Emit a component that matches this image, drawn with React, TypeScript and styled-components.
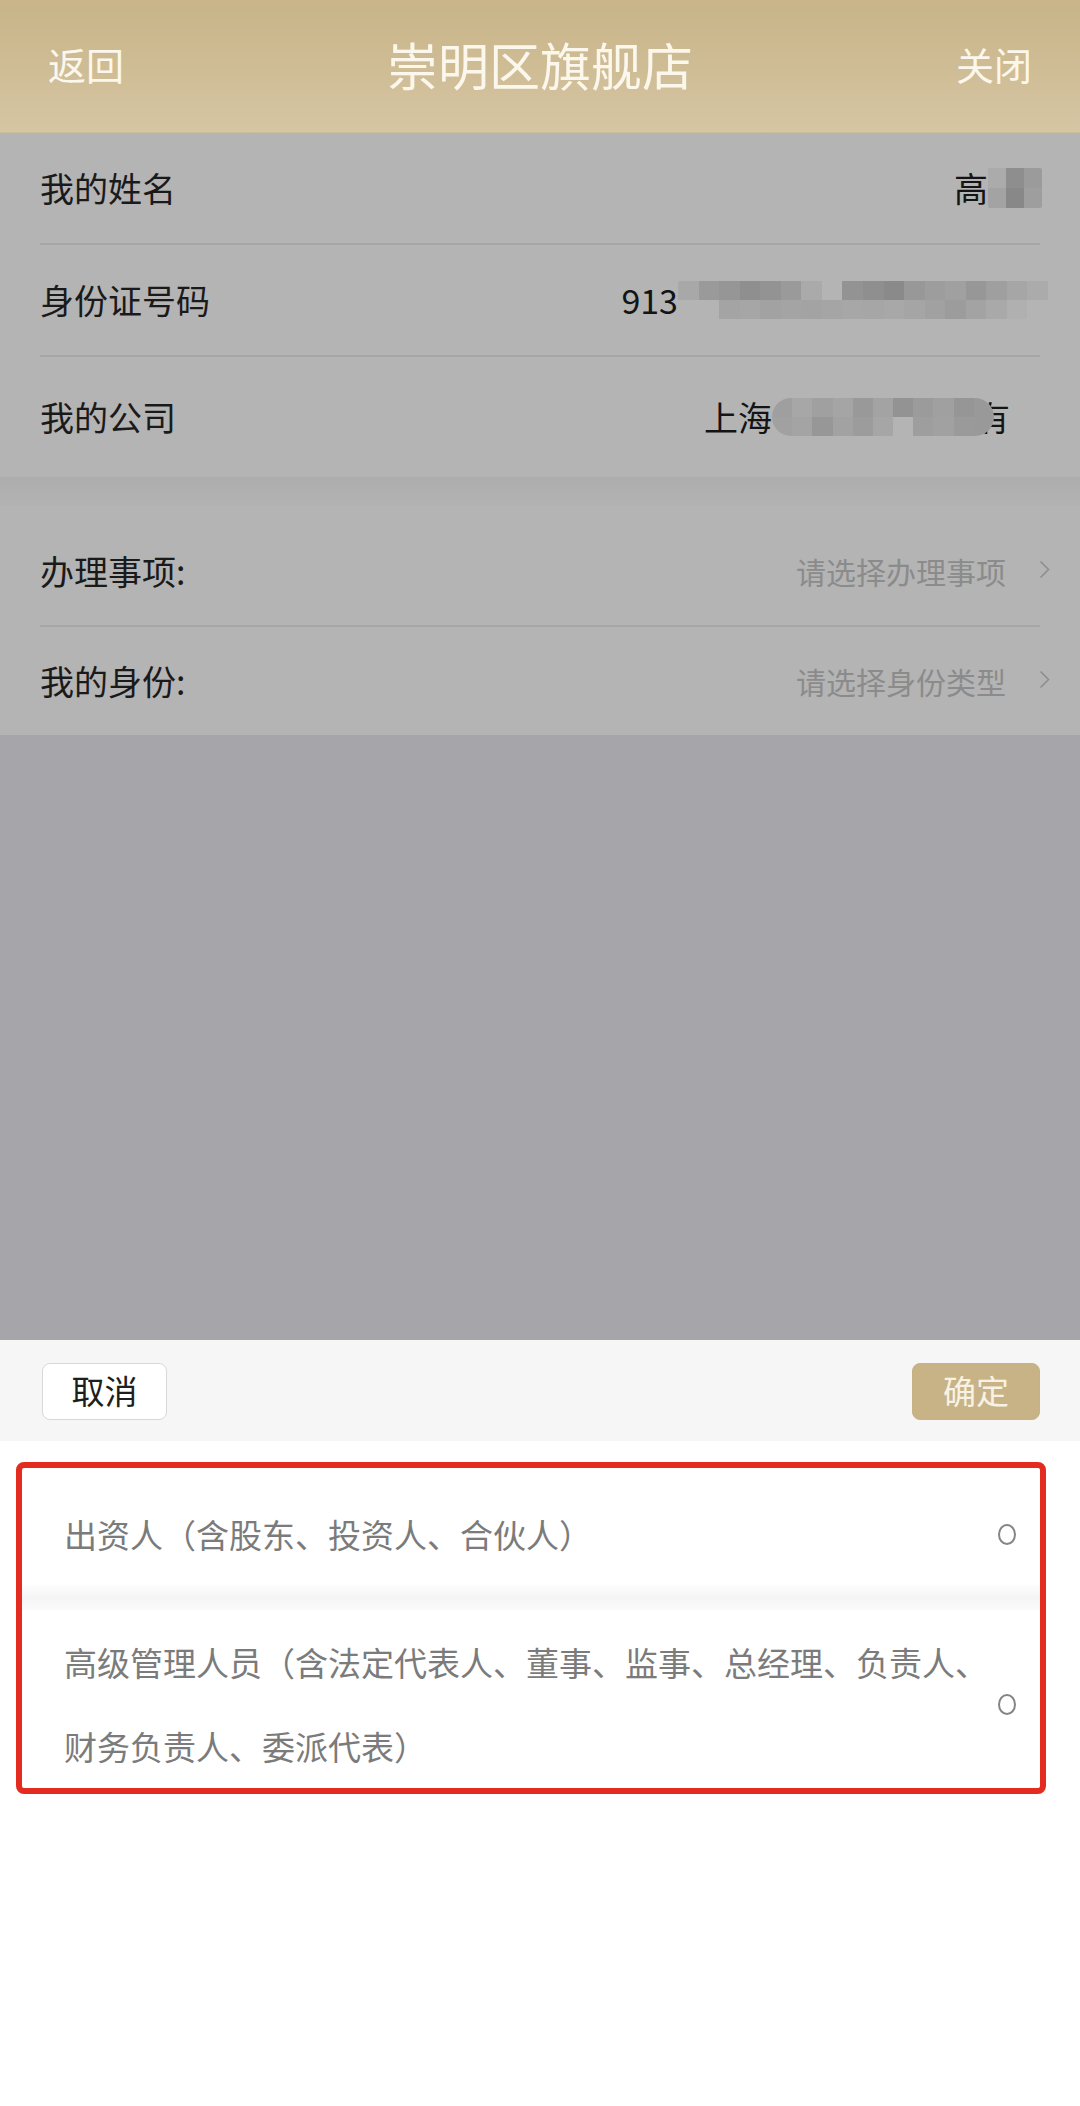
import React from 'react';
import styled, { createGlobalStyle } from 'styled-components';

const GlobalStyle = createGlobalStyle`
  html, body {
    margin: 0;
    padding: 0;
    background: #ffffff;
  }
  body {
    font-family: "Noto Sans CJK SC", "Noto Sans", "Liberation Sans", sans-serif;
  }
  * {
    box-sizing: border-box;
  }
`;

const Page = styled.div`
  width: 1080px;
  min-height: 2106px;
  display: flex;
  flex-direction: column;
  background: #ffffff;
`;

const Header = styled.header`
  height: 133px;
  display: grid;
  grid-template-columns: 1fr auto 1fr;
  align-items: center;
  padding: 0 48px;
  background: linear-gradient(180deg, #c8b488 0%, #cfbd96 55%, #d5c6a4 100%);
  border-bottom: 1px solid #c9bb9c;
  color: #fcf7ec;
`;

const NavText = styled.span<{ $align: 'left' | 'right' }>`
  font-size: 38px;
  line-height: 1;
  justify-self: ${(p) => (p.$align === 'left' ? 'start' : 'end')};
  padding-bottom: 4px;
`;

const Title = styled.h1`
  margin: 0;
  font-size: 51px;
  font-weight: 400;
  line-height: 1;
  padding-bottom: 4px;
`;

const Dimmed = styled.div`
  height: 1207px;
  display: flex;
  flex-direction: column;
  background: #a6a5aa;
`;

const Section = styled.section<{ $pt?: number }>`
  background: #b4b4b4;
  padding-top: ${(p) => p.$pt ?? 0}px;
`;

const SectionGap = styled.div`
  height: 28px;
  background: linear-gradient(180deg, #adadad 0%, #b0b0b0 50%, #b2b2b2 100%);
`;

const Row = styled.div<{ $h: number; $line?: boolean }>`
  height: ${(p) => p.$h}px;
  margin: 0 40px;
  display: flex;
  align-items: center;
  justify-content: space-between;
  border-bottom: ${(p) => (p.$line ? '2px solid #a6a6a6' : 'none')};
`;

const Label = styled.span`
  font-size: 34px;
  color: #1a1a1a;
  line-height: 1;
`;

const ValueGroup = styled.div<{ $shift: number }>`
  display: flex;
  align-items: center;
  margin-right: ${(p) => p.$shift}px;
`;

const Value = styled.span<{ $pull?: number }>`
  font-size: 34px;
  color: #141414;
  line-height: 1;
  margin-left: ${(p) => p.$pull ?? 0}px;
`;

const Mosaic = styled.div<{ $cols: number; $w: number; $h: number; $round?: boolean }>`
  display: grid;
  grid-template-columns: repeat(${(p) => p.$cols}, 1fr);
  grid-auto-rows: 1fr;
  width: ${(p) => p.$w}px;
  height: ${(p) => p.$h}px;
  border-radius: ${(p) => (p.$round ? '19px' : '2px')};
  overflow: hidden;
  position: relative;
  z-index: 1;
`;

const Block = styled.span<{ $shade: string }>`
  background: ${(p) => p.$shade};
`;

const Placeholder = styled.span`
  font-size: 30px;
  color: #8b8b8b;
  line-height: 1;
`;

const Chevron = styled.svg`
  width: 11px;
  height: 19px;
  margin-left: 33px;
  margin-top: -4px;
`;

const Backdrop = styled.div`
  flex: 1;
`;

const Toolbar = styled.div`
  height: 101px;
  background: #f6f6f6;
  display: flex;
  align-items: center;
  justify-content: space-between;
  padding: 0 40px 0 42px;
`;

const ToolButton = styled.button<{ $primary?: boolean }>`
  height: 57px;
  width: ${(p) => (p.$primary ? 128 : 125)}px;
  border-radius: 8px;
  border: 1px solid ${(p) => (p.$primary ? '#c7b284' : '#d8d8d8')};
  background: ${(p) => (p.$primary ? '#c8b386' : '#ffffff')};
  color: ${(p) => (p.$primary ? '#f8f2e4' : '#1e1e1e')};
  font-family: inherit;
  font-size: 33px;
  line-height: 1;
  padding: 0 0 3px;
  margin-top: 2px;
`;

const Sheet = styled.div`
  flex: 1;
  background: #ffffff;
  padding: 21px 34px 0 16px;
`;

const Frame = styled.div`
  border: 6px solid #e42b1f;
  border-radius: 8px;
  background: #ffffff;
`;

const Option = styled.div<{ $pt: number; $pb: number }>`
  display: flex;
  align-items: center;
  padding: ${(p) => p.$pt}px 24px ${(p) => p.$pb}px 42px;
`;

const OptionText = styled.span`
  flex: 1;
  font-size: 33px;
  line-height: 84px;
  color: #7b7b7b;
`;

const Radio = styled.span`
  width: 18px;
  height: 21px;
  border: 2px solid #858585;
  border-radius: 50%;
  flex-shrink: 0;
`;

const OptionGap = styled.div`
  height: 25px;
  background: linear-gradient(180deg, #fdfdfd 0%, #f5f5f5 50%, #fbfbfb 100%);
`;

const nameShades = ['#ababab', '#8e8e8e', '#9b9b9b', '#a3a3a3', '#888888', '#9e9e9e'];
const idShades = [
  '#a8a8a8', '#9a9a9a', '#969696', '#8f8f8f', '#939393', '#9a9a9a', '#aaaaaa', '#b4b4b4', '#939393',
  '#8f8f8f', '#8a8a8a', '#989898', '#9d9d9d', '#a0a0a0', '#979797', '#9f9f9f', '#a6a6a6', '#ababab',
  '#b4b4b4', '#b4b4b4', '#a4a4a4', '#a6a6a6', '#a2a2a2', '#a4a4a4', '#a3a3a3', '#a5a5a5', '#a7a7a7',
  '#a6a6a6', '#a8a8a8', '#a5a5a5', '#a1a1a1', '#9c9c9c', '#a3a3a3', '#a9a9a9', '#b0b0b0', '#b4b4b4',
];
const companyShades = [
  '#9f9f9f', '#a7a7a7', '#a0a0a0', '#a5a5a5', '#999999', '#a3a3a3', '#939393', '#9b9b9b', '#a0a0a0', '#969696', '#999999',
  '#a1a1a1', '#a4a4a4', '#979797', '#a2a2a2', '#9c9c9c', '#a6a6a6', '#b4b4b4', '#9e9e9e', '#a1a1a1', '#9a9a9a', '#999999',
];

const Arrow = () => (
  <Chevron viewBox="0 0 11 19">
    <polyline points="1.5,1.5 9.5,9.5 1.5,17.5" fill="none" stroke="#8e8e8e" strokeWidth="1.6" />
  </Chevron>
);

const App = () => {
  return (
    <Page>
      <GlobalStyle />
      <Header>
        <NavText $align="left">返回</NavText>
        <Title>崇明区旗舰店</Title>
        <NavText $align="right">关闭</NavText>
      </Header>

      <Dimmed>
        <Section>
          <Row $h={112} $line>
            <Label>我的姓名</Label>
            <ValueGroup $shift={-2}>
              <Value>高</Value>
              <Mosaic $cols={3} $w={54} $h={40}>
                {nameShades.map((s, i) => (
                  <Block key={i} $shade={s} />
                ))}
              </Mosaic>
            </ValueGroup>
          </Row>
          <Row $h={112} $line>
            <Label>身份证号码</Label>
            <ValueGroup $shift={-8}>
              <Value>913</Value>
              <Mosaic $cols={18} $w={370} $h={38}>
                {idShades.map((s, i) => (
                  <Block key={i} $shade={s} />
                ))}
              </Mosaic>
            </ValueGroup>
          </Row>
          <Row $h={120}>
            <Label>我的公司</Label>
            <ValueGroup $shift={30}>
              <Value>上海</Value>
              <Mosaic $cols={11} $w={222} $h={38} $round>
                {companyShades.map((s, i) => (
                  <Block key={i} $shade={s} />
                ))}
              </Mosaic>
              <Value $pull={-18}>有</Value>
            </ValueGroup>
          </Row>
        </Section>

        <SectionGap />

        <Section $pt={12}>
          <Row $h={110} $line>
            <Label>办理事项:</Label>
            <ValueGroup $shift={-10}>
              <Placeholder>请选择办理事项</Placeholder>
              <Arrow />
            </ValueGroup>
          </Row>
          <Row $h={108}>
            <Label>我的身份:</Label>
            <ValueGroup $shift={-10}>
              <Placeholder>请选择身份类型</Placeholder>
              <Arrow />
            </ValueGroup>
          </Row>
        </Section>

        <Backdrop />
      </Dimmed>

      <Toolbar>
        <ToolButton>取消</ToolButton>
        <ToolButton $primary>确定</ToolButton>
      </Toolbar>

      <Sheet>
        <Frame>
          <Option $pt={24} $pb={9}>
            <OptionText>出资人（含股东、投资人、合伙人）</OptionText>
            <Radio />
          </Option>
          <OptionGap />
          <Option $pt={10} $pb={0}>
            <OptionText>高级管理人员（含法定代表人、董事、监事、总经理、负责人、财务负责人、委派代表）</OptionText>
            <Radio />
          </Option>
        </Frame>
      </Sheet>
    </Page>
  );
};

export default App;
